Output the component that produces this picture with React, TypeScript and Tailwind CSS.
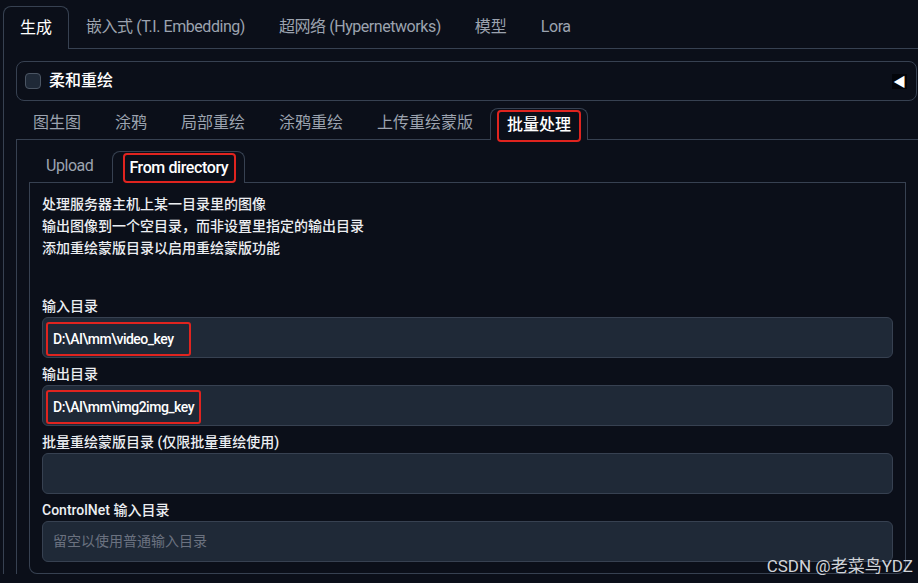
import React from "react";

const FONT = "font-['Roboto','Noto_Sans_CJK_SC',sans-serif]";

const TOP_TABS = ["生成", "嵌入式 (T.I. Embedding)", "超网络 (Hypernetworks)", "模型", "Lora"];
const SUB_TABS = ["图生图", "涂鸦", "局部重绘", "涂鸦重绘", "上传重绘蒙版", "批量处理"];

// latin text in the reference font runs narrower than Roboto
const hasLatin = (s: string) => /[A-Za-z]/.test(s);

function Tab({ label, active, marked, h }: { label: string; active: boolean; marked?: boolean; h: string }) {
    const track = hasLatin(label) ? " tracking-[-0.45px]" : "";
    if (active) {
        return (
            <div className={"relative -mb-px flex items-center rounded-t-lg border-x border-t border-[#374151] bg-[#0b0f19] px-[16px] text-white " + h + track}>
                {label}
                {marked ? <span className="absolute inset-x-[6px] top-[1px] -bottom-[2px] rounded-[4px] border-2 border-[#e0241f]" /> : null}
            </div>
        )
    }
    return <div className={"flex items-center px-[17px] pb-px text-[#9ca3af]" + track}>{label}</div>
}

function Field({ label, value, placeholder, markWidth }: { label: string; value?: string; placeholder?: string; markWidth?: string }) {
    return (
        <div className="flex flex-col">
            <div className="h-[18px] text-[14px] font-medium leading-[18px] text-[#eceef2]">{label}</div>
            <div className="mt-[2px] flex h-[41px] items-center rounded-md border border-[#374151] bg-[#1f2937] pl-[3px]">
                {value ? (
                    <span className={"mt-[4px] flex h-[34px] items-center self-start rounded-[3px] border-2 border-[#e0241f] px-[5px] text-[14px] font-medium tracking-[-0.5px] text-white " + markWidth}>
                        {value}
                    </span>
                ) : (
                    <span className="pl-[7px] text-[14px] text-[#6b7280]">{placeholder}</span>
                )}
            </div>
        </div>
    )
}

export default function App() {
    return (
        <div className={"relative h-[583px] w-[918px] overflow-hidden bg-[#0b0f19] pt-[6px] " + FONT}>
            {/* top tabs */}
            <div className="ml-[3px] flex h-[43px] items-stretch border-b border-[#374151] text-[16px]">
                {TOP_TABS.map((t, i) => (
                    <Tab key={t} label={t} active={i === 0} h="h-[43px]" />
                ))}
            </div>

            <div className="ml-[3px] border-l border-[#374151] pl-[12px] pt-[12px]">
                {/* accordion */}
                <div className="flex h-[40px] w-[901px] items-center rounded-lg border border-[#374151] px-[8px]">
                    <span className="h-[16px] w-[16px] rounded-[4px] border border-[#4b5563] bg-[#1f2937]" />
                    <span className="ml-[8px] text-[16px] font-medium text-white">柔和重绘</span>
                    <span className="ml-auto mr-[1px] bg-[#03050a] px-[1px] text-[13px] leading-[15px] text-white">◀</span>
                </div>

                {/* img2img tabs */}
                <div className="mt-[7px] flex h-[32px] items-stretch border-b border-[#374151] text-[16px]">
                    {SUB_TABS.map((t, i) => (
                        <Tab key={t} label={t} active={i === SUB_TABS.length - 1} marked h="h-[32px] font-medium" />
                    ))}
                </div>

                <div className="border-l border-[#374151] pl-[12px] pt-[11px]">
                    {/* upload / directory tabs */}
                    <div className="flex h-[32px] w-[877px] items-stretch border-b border-[#374151] text-[16px]">
                        <div className="flex items-center pb-px pl-[17px] pr-[19px] tracking-[-0.45px] text-[#9ca3af]">Upload</div>
                        <div className="relative -mb-px flex h-[32px] items-center rounded-t-lg border-x border-t border-[#374151] bg-[#0b0f19] px-[16px] font-medium tracking-[-0.4px] text-white">
                            From directory
                            <span className="absolute left-[10px] right-[8px] top-[1px] bottom-0 rounded-[4px] border-2 border-[#e0241f]" />
                        </div>
                    </div>

                    <div className="w-[877px] rounded-b-lg border-x border-b border-[#374151] px-[12px] pb-[11px] pt-[10px]">
                        <div className="text-[14px] font-medium leading-[22px] text-[#eceef2]">
                            <p>处理服务器主机上某一目录里的图像</p>
                            <p>输出图像到一个空目录，而非设置里指定的输出目录</p>
                            <p>添加重绘蒙版目录以启用重绘蒙版功能</p>
                        </div>
                        <div className="mt-[38px] flex flex-col gap-[7px]">
                            <Field label="输入目录" value="D:\AI\mm\video_key" markWidth="w-[145px]" />
                            <Field label="输出目录" value="D:\AI\mm\img2img_key" markWidth="w-[155px]" />
                            <Field label="批量重绘蒙版目录 (仅限批量重绘使用)" />
                            <Field label="ControlNet 输入目录" placeholder="留空以使用普通输入目录" />
                        </div>
                    </div>
                </div>
            </div>

            <div className="absolute bottom-[7px] right-[5px] text-[17px] leading-[20px] text-[#d0d3d8]">CSDN @老菜鸟YDZ</div>
        </div>
    )
}
